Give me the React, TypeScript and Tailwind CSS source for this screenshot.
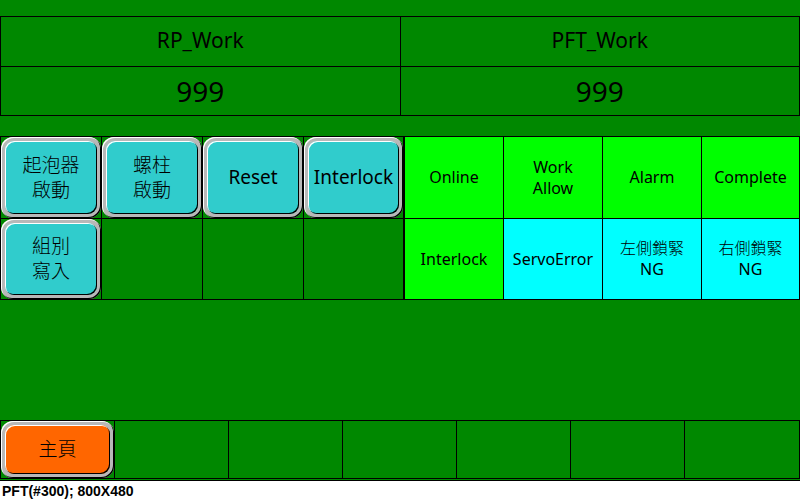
import clsx from "clsx";

type Tone = "on" | "idle";

const works = [
  { name: "RP_Work", value: 999 },
  { name: "PFT_Work", value: 999 },
];

const commands: (string[] | null)[] = [
  ["起泡器", "啟動"],
  ["螺柱", "啟動"],
  ["Reset"],
  ["Interlock"],
  ["組別", "寫入"],
  null,
  null,
  null,
];

const lamps: { lines: string[]; tone: Tone }[] = [
  { lines: ["Online"], tone: "on" },
  { lines: ["Work", "Allow"], tone: "on" },
  { lines: ["Alarm"], tone: "on" },
  { lines: ["Complete"], tone: "on" },
  { lines: ["Interlock"], tone: "on" },
  { lines: ["ServoError"], tone: "idle" },
  { lines: ["左側鎖緊", "NG"], tone: "idle" },
  { lines: ["右側鎖緊", "NG"], tone: "idle" },
];

const pages: (string | null)[] = ["主頁", null, null, null, null, null, null];

function Lines({ lines }: { lines: string[] }) {
  return (
    <>
      {lines.map((line) => (
        <span
          key={line}
          className={clsx(
            "block whitespace-nowrap",
            /[\u4e00-\u9fff]/.test(line) && "font-light",
          )}
        >
          {line}
        </span>
      ))}
    </>
  );
}

function PanelButton({ lines, face }: { lines: string[]; face: string }) {
  return (
    <button
      type="button"
      className="flex h-full w-full rounded-xl bg-[#b8b8b8] p-1 text-[19px] leading-[25px] shadow-[inset_1px_1px_0_#ffffff,inset_-1px_-1px_0_#000000]"
    >
      <span
        className={clsx(
          "flex h-full w-full flex-col items-center justify-center rounded-[9px] shadow-[inset_1px_1px_0_#ffffff,inset_-1px_-1px_0_#000000]",
          face,
        )}
      >
        <Lines lines={lines} />
      </span>
    </button>
  );
}

function WorkTable() {
  return (
    <table className="w-full table-fixed border-separate border-spacing-0 border-r border-b border-black">
      <thead>
        <tr>
          {works.map((work) => (
            <th
              key={work.name}
              scope="col"
              className="h-[50px] border-t border-l border-black px-0 pt-0 pb-1 text-center text-[21px] leading-7 font-normal"
            >
              {work.name}
            </th>
          ))}
        </tr>
      </thead>
      <tbody>
        <tr>
          {works.map((work) => (
            <td
              key={work.name}
              className="h-[49px] border-t border-l border-black p-0 text-center text-[28px] leading-8"
            >
              {work.value}
            </td>
          ))}
        </tr>
      </tbody>
    </table>
  );
}

export default function App() {
  return (
    <div className="flex min-h-screen flex-col bg-white font-['Noto_Sans','Noto_Sans_CJK_TC',sans-serif] text-black">
      <main className="flex flex-1 flex-col border-b border-black bg-[#008800] pt-4 pb-px">
        <WorkTable />

        <div className="mt-5 grid grid-cols-[101fr_99fr]">
          <section className="grid grid-cols-4" aria-label="Commands">
            {commands.map((lines, i) => (
              <div
                key={i}
                className={clsx(
                  "h-[82px] border-t border-l border-black",
                  i % 4 === 3 && "border-r",
                  i > 3 && "border-b",
                )}
              >
                {lines && <PanelButton lines={lines} face="bg-[#30cccc]" />}
              </div>
            ))}
          </section>

          <section className="grid grid-cols-4" aria-label="Status">
            {lamps.map(({ lines, tone }, i) => (
              <div
                key={i}
                className={clsx(
                  "flex h-[82px] flex-col items-center justify-center border-t border-l border-black text-base leading-[21px]",
                  tone === "on" ? "bg-[#00ff00]" : "bg-[#00ffff]",
                  i % 4 === 3 && "border-r",
                  i > 3 && "border-b",
                )}
              >
                <Lines lines={lines} />
              </div>
            ))}
          </section>
        </div>

        <nav className="mt-auto grid grid-cols-[repeat(6,57fr)_58fr]">
          {pages.map((page, i) => (
            <div
              key={i}
              className="h-[59px] border-t border-b border-l border-black last:border-r"
            >
              {page && <PanelButton lines={[page]} face="bg-[#ff6600]" />}
            </div>
          ))}
        </nav>
      </main>

      <footer className="h-[21px] px-0.5 font-['Liberation_Sans',sans-serif] text-sm leading-5 font-bold">
        PFT(#300); 800X480
      </footer>
    </div>
  );
}
